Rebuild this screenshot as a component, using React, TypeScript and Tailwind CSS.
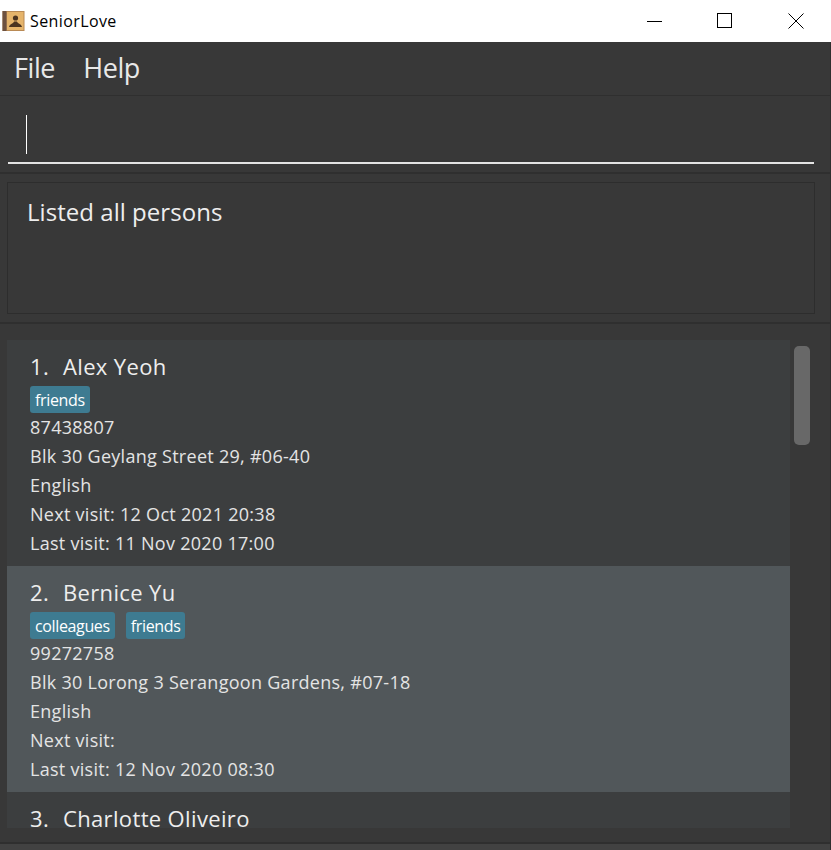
const font = "[font-family:'Open_Sans','Noto_Sans',sans-serif]";

function Tag({ children }: { children: string }) {
  return (
    <span className="flex h-[27px] items-center rounded-[3px] bg-[#3e7b91] px-[5px] text-[16px] tracking-[-0.36px] text-white">
      {children}
    </span>
  );
}

function Line({ children }: { children: string }) {
  return <div className="h-[29px] text-[18px] leading-[29px] tracking-[0.28px] whitespace-nowrap">{children}</div>;
}

function Card(p: { n: number; name: string; tags: string[]; phone: string; addr: string; next: string; last: string; selected?: boolean }) {
  return (
    <div className={`h-[226px] shrink-0 pl-[23px] pt-[10px] text-[#e4e4e4] ${p.selected ? "bg-[#51575a]" : "bg-[#3c3e3f]"}`}>
      <div className="flex h-[32px] items-center text-[22px] tracking-[0.35px] text-[#eeeeee]">
        <span className="w-[33px]">{p.n}.</span>
        <span>{p.name}</span>
      </div>
      <div className="mt-[3px] flex h-[28px] items-start gap-[11px] pt-px">
        {p.tags.map((t) => (
          <Tag key={t}>{t}</Tag>
        ))}
      </div>
      <Line>{p.phone}</Line>
      <Line>{p.addr}</Line>
      <Line>English</Line>
      <Line>{p.next}</Line>
      <Line>{p.last}</Line>
    </div>
  );
}

export default function App() {
  return (
    <div className={`flex h-[850px] w-[831px] flex-col overflow-hidden bg-[#383838] ${font}`}>
      <div className="flex h-[42px] shrink-0 items-center bg-white pl-[2px] text-black">
        <svg width="23" height="23" viewBox="0 0 23 23" className="shrink-0">
          <rect x="0.5" y="1" width="22" height="20" fill="#b98a55" />
          <rect x="0.5" y="1" width="4" height="20" fill="#6d5140" />
          <rect x="5" y="2" width="16.5" height="18" fill="#e5b46b" />
          <circle cx="13.5" cy="8" r="2.6" fill="#4a3320" />
          <path d="M7 17 C7.5 14 11 14 12.2 11.5 h2.6 C16 14 19.5 14 20 17 Z" fill="#4a3320" />
        </svg>
        <span className="ml-[5px] text-[16px] tracking-[0.4px]">SeniorLove</span>
        <div className="ml-auto flex items-center">
          <svg width="16" height="16" viewBox="0 0 16 16" className="mr-[54px]">
            <path d="M0 8.5H15" stroke="#000" />
          </svg>
          <svg width="16" height="16" viewBox="0 0 16 16" className="mr-[55px]">
            <rect x="0.5" y="0.5" width="14" height="14" fill="none" stroke="#000" />
          </svg>
          <svg width="16" height="16" viewBox="0 0 16 16" className="mr-[27px]">
            <path d="M0.5 0.5L15.5 15.5M15.5 0.5L0.5 15.5" stroke="#000" />
          </svg>
        </div>
      </div>

      <div className="flex min-h-0 flex-1 flex-col border-r border-[#2f2f2f]">
        <div className="flex h-[54px] shrink-0 items-center gap-[28px] border-b border-[#2f2f2f] pl-[14px] text-[27px] tracking-[-0.4px] text-[#e8e8e8]">
          <span>File</span>
          <span>Help</span>
        </div>

        <div className="h-[78px] shrink-0 border-b-2 border-[#2f2f2f] pl-[8px] pr-[16px]">
          <div className="flex h-[68px] items-center border-b-2 border-[#e4e4e4] pl-[18px]">
            <div className="mt-[10px] h-[39px] w-px bg-white" />
          </div>
        </div>

        <div className="h-[150px] shrink-0 border-b-2 border-[#2f2f2f] pl-[7px] pr-[15px] pt-[8px]">
          <div className="h-[132px] border border-[#2d2d2d] pl-[19px] pt-[11px] text-[24px] leading-[36px] tracking-[0.04px] text-[#eeeeee]">
            Listed all persons
          </div>
        </div>

        <div className="flex min-h-0 flex-1 border-b-2 border-[#2f2f2f] pb-[14px] pl-[7px] pt-[16px]">
          <div className="flex min-h-0 w-[783px] flex-col overflow-hidden">
            <Card n={1} name="Alex Yeoh" tags={["friends"]} phone="87438807" addr="Blk 30 Geylang Street 29, #06-40" next="Next visit: 12 Oct 2021 20:38" last="Last visit: 11 Nov 2020 17:00" />
            <Card selected n={2} name="Bernice Yu" tags={["colleagues", "friends"]} phone="99272758" addr="Blk 30 Lorong 3 Serangoon Gardens, #07-18" next="Next visit:" last="Last visit: 12 Nov 2020 08:30" />
            <Card n={3} name="Charlotte Oliveiro" tags={[]} phone="" addr="" next="" last="" />
          </div>
          <div className="ml-[4px] mt-[6px] h-[99px] w-[16px] rounded-[5px] bg-[#686868]" />
        </div>
        <div className="h-[6px] shrink-0 bg-[#424242]" />
      </div>
    </div>
  );
}
